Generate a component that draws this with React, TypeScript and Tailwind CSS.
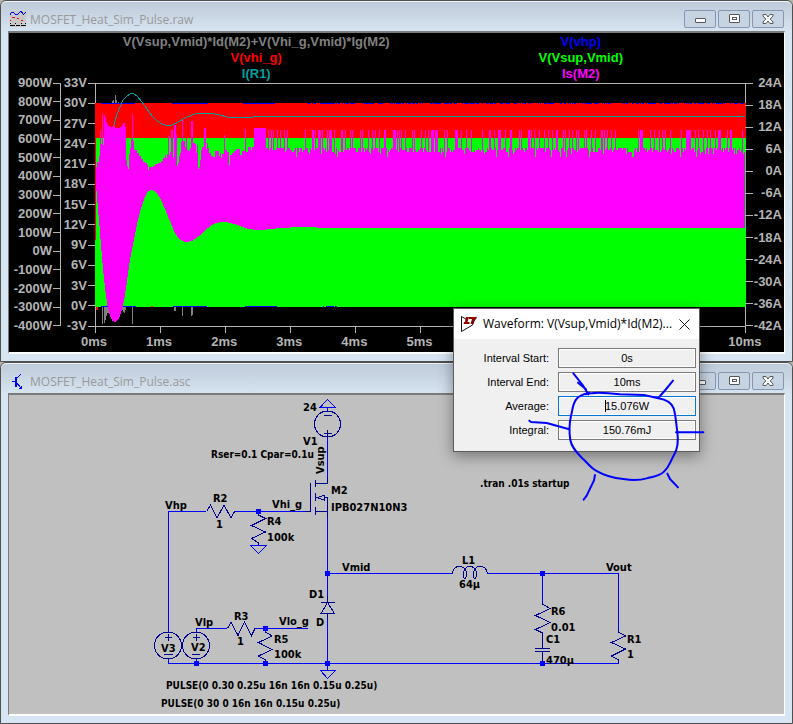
import React from 'react';

const WATTS = ['900W', '800W', '700W', '600W', '500W', '400W', '300W', '200W', '100W', '0W', '-100W', '-200W', '-300W', '-400W'];
const VOLTS = ['33V', '30V', '27V', '24V', '21V', '18V', '15V', '12V', '9V', '6V', '3V', '0V', '-3V'];
const AMPS = ['24A', '18A', '12A', '6A', '0A', '-6A', '-12A', '-18A', '-24A', '-30A', '-36A', '-42A'];
const TIMES = ['0ms', '1ms', '2ms', '3ms', '4ms', '5ms', '6ms', '7ms', '8ms', '9ms', '10ms'];

// Upper envelope of Is(M2) during start-up, as [x, y] steps.
const STARTUP: number[][] = [
  [96, 167], [97, 162], [99, 156], [100, 130], [101, 144], [102, 114], [103, 145], [104, 115], [105, 118], [106, 122],
  [107, 124], [108, 126], [110, 127], [113, 126], [115, 128], [120, 127], [122, 125], [123, 123], [125, 127],
  [126, 160], [127, 166], [128, 169], [129, 154], [130, 148], [131, 139], [132, 114], [133, 141], [134, 150],
  [136, 150], [137, 153], [139, 156], [141, 159], [143, 162], [145, 163], [147, 165], [148, 170], [149, 167],
  [153, 166], [155, 164], [158, 163], [161, 161], [163, 158], [165, 155], [166, 158], [167, 154], [168, 136], [169, 155],
  [170, 152], [171, 130], [173, 157], [174, 125], [176, 135], [177, 166], [178, 163], [179, 156], [180, 153],
  [181, 142], [182, 119], [183, 141], [185, 147], [186, 138], [187, 150], [189, 151], [190, 148], [191, 121],
  [193, 143], [195, 144], [196, 153], [197, 145], [198, 169], [199, 167], [200, 160], [201, 150], [202, 147],
  [204, 128], [206, 149], [207, 143], [208, 148], [209, 153], [211, 156], [213, 157], [215, 151], [218, 151],
  [219, 156], [220, 153], [221, 158], [222, 154], [224, 135], [225, 150], [227, 152], [229, 165], [230, 155],
  [232, 153], [234, 151], [236, 149], [240, 155], [242, 151], [245, 129], [246, 152], [248, 147], [251, 150],
  [252, 147], [254, 128], [266, 147],
];

const SPIKES_A = [10, 20, 26, 38, 46, 57, 68, 120, 143, 145, 150, 160, 163, 166, 172, 187, 193, 196, 199, 207, 229, 232, 240, 256, 262, 287, 293, 310, 322, 330, 343, 357, 362, 386, 389, 391, 398, 403, 410, 422, 443, 448, 468, 482, 490, 498, 501, 504, 512, 515, 518, 538, 547, 572, 575, 578, 590, 605, 620, 652, 673, 676, 687, 700, 703, 706, 722, 735, 740, 762, 770, 790];
const SPIKES_B = [5, 9, 20, 35, 50, 60, 72, 85, 88, 107, 112, 125, 133, 145, 152, 168, 175, 190, 203, 221, 224, 228, 238, 250, 262, 332, 338, 341, 344, 368, 380, 395, 402, 412, 427, 460, 474, 477, 480, 483, 486, 502, 512, 525, 537, 547, 562, 572, 575, 578, 597, 608, 611, 642];
const SPIKES = new Set([
  ...SPIKES_A.map((v) => 265 + Math.floor(v / 3)),
  ...SPIKES_B.map((v) => 528 + Math.floor(v / 3)),
]);

const noise = (n: number) => {
  const v = Math.sin(n * 12.9898) * 43758.5453;
  return v - Math.floor(v);
};

const magentaTop = (() => {
  let d = '';
  for (let i = 0; i < STARTUP.length - 1; i++) {
    const [x, y] = STARTUP[i];
    d += `L${x} ${y}H${STARTUP[i + 1][0]}`;
  }
  for (let x = 266; x < 745; x++) {
    const r = noise(x);
    let y = 148;
    if (r > 0.45) y = 150;
    if (r > 0.7) y = 152;
    if (r > 0.9) y = 154;
    if (r > 0.97) y = 157;
    if (SPIKES.has(x)) y = 130;
    d += `L${x} ${y}H${x + 1}`;
  }
  return d;
})();

const MAGENTA = `M96 185${magentaTop}V228H330C310 227 295 227 280 228C265 230 255 231 245 228C238 225 230 222 222 222C212 222 206 230 199 236C195 240 191 242 187 242C180 242 177 237 174 231C170 221 165 209 161 200C157 192 154 190 151 190C146 190 144 200 141 208C137 222 134 240 130 260C127 279 125 300 122 309C120 316 118 322 115 322C111 322 109 314 107 303C104 283 102 258 100 232C98 210 97 195 96 185Z`;

const vhpDashes = (() => {
  let d = 'M101 103.5H135M172 103.5H208M243 103.5H275';
  for (let x = 308; x < 744; x += 2) {
    if (noise(x + 7) > 0.35) d += `M${x} 103.5h${noise(x) > 0.5 ? 2 : 1}`;
  }
  return d;
})();

function Plot() {
  return (
    <svg viewBox="95 83 650 243" preserveAspectRatio="none" className="my-2 block h-[243px] min-w-0 flex-1 overflow-visible" shapeRendering="crispEdges" fill="none" aria-label="Waveform plot">
      <g fill="#808080">
        <path d="M112 101h1v2h-1zM113 100h1v3h-1zM115 95h1v8h-1zM116 100h1v3h-1zM118 102h1v1h-1z" />
        <path d="M102 307h1v17h-1zM104 307h1v16h-1zM105 307h1v13h-1zM106 307h1v9h-1zM107 307h2v6h-2zM121 307h2v3h-2zM123 307h1v5h-1zM124 307h1v6h-1zM125 307h1v3h-1zM132 307h1v17h-1zM174 307h2v4h-2zM182 307h1v9h-1zM191 307h1v9h-1zM192 307h1v8h-1z" />
      </g>
      <rect x="95" y="103" width="651" height="35" fill="#ff0000" />
      <rect x="95" y="138" width="651" height="169" fill="#00ff00" />
      <path d="M95 103h1v137h-1zM96 307h2v3h-2zM151 306h2v1h-2z" fill="#ff0000" />
      <path d={vhpDashes} stroke="#0000ff" />
      <path d="M101 306.5h35M173 306.5h34M245 306.5h32M323 306.5h1M326 306.5h8M335 306.5h2" stroke="#0000ff" />
      <path d={MAGENTA} fill="#ff00ff" />
      <path d="M113.5 126.5L117 114L120 107L123 100L127 96L130 94L133.5 93.5L137 96L142 102L147 109L152 116L157 121L162 124L167 125.5L172 125L178 122L185 118L192 115L197 113.5L202 113L213 113.5L220 115L227 117L240 118L253 117L265 116.5H745" stroke="#00a0a0" />
      <path d="M95.5 103V83.5M95 83.5H745.5V103M745.5 307V333M95 326.5H745M95.5 307V333" stroke="#b4b4b4" />
      <path d="M160.5 326v7M225.5 326v7M290.5 326v7M355.5 326v7M420.5 326v7M485.5 326v7M550.5 326v7M615.5 326v7M680.5 326v7" stroke="#b4b4b4" />
    </svg>
  );
}

function LeftAxis({ labels, className }: { labels: string[]; className: string }) {
  return (
    <div className={`my-2 h-[243px] shrink-0 ${className}`}>
      <div className="-my-2 flex h-[259px] flex-col justify-between">
        {labels.map((l) => (
          <div key={l} className="flex h-4 items-center justify-end">
            {l}
            <span className="ml-px h-px w-[7px] bg-[#b4b4b4]" />
          </div>
        ))}
      </div>
    </div>
  );
}

function WaveIcon() {
  return (
    <svg viewBox="0 0 16 16" className="size-4" shapeRendering="crispEdges" fill="none" aria-hidden="true">
      <rect width="16" height="16" fill="#c8c8c8" />
      <path d="M0 4L1 2L3 1L5 3L7 4L9 2L11 0L13 3L14 3L16 1" stroke="#0000ff" />
      <path d="M2 6h3v1H2zM7 7h2v1H7zM11 9h2v1h-2zM0 9h1v1H0z" fill="#ff0000" />
      <path d="M0 12h1v1H0zM5 12h1v1H5zM11 12h1v1h-1zM15 12h1v1h-1zM0 14h5v1H0zM6 14h4v1H6zM11 14h5v1h-5z" fill="#000" />
    </svg>
  );
}

function TransistorIcon() {
  return (
    <svg viewBox="0 0 16 16" className="size-4" shapeRendering="crispEdges" fill="none" aria-hidden="true">
      <path d="M2 8.500H6M6 9L11 15M5 7L11 1" stroke="#0000ff" />
      <path d="M5 4h2v10H5zM12 16V12L8 16Z" fill="#0000ff" />
    </svg>
  );
}

const captionButton = 'flex h-[18px] w-8 items-center justify-center rounded-xs border border-[#8697b3] bg-[#c6d3e1]';

function MdiWindow({ title, icon, children, clientClass }: { title: string; icon: React.ReactNode; children: React.ReactNode; clientClass: string }) {
  return (
    <section className="rounded-t-md border border-[#50504f] bg-[#d7e4f2] px-[7px] pb-[7px]">
      <header className="-mx-[7px] flex h-[30px] items-center rounded-t-md border-t border-[#eef3f8] bg-linear-to-b from-[#bfcbda] to-[#d6e3f0] pt-1 pr-2 pl-[9px]">
        {icon}
        <h1 className="ml-1 flex-1 pt-0.5 font-['Open_Sans','Noto_Sans',sans-serif] text-[12px] leading-4 text-[#999]">{title}</h1>
        <div className="flex gap-0.5">
          <button type="button" aria-label="Minimize" className={captionButton}>
            <span className="mt-1 h-[5px] w-[11px] rounded-[1px] border border-[#55565e] bg-white" />
          </button>
          <button type="button" aria-label="Restore" className={captionButton}>
            <span className="flex h-[9px] w-[11px] items-center justify-center rounded-[1px] border border-[#55565e] bg-white">
              <span className="h-[3px] w-[5px] border border-[#55565e]" />
            </span>
          </button>
          <button type="button" aria-label="Close" className={captionButton}>
            <svg viewBox="0 0 12 10" className="h-2.5 w-3" aria-hidden="true">
              <path d="M1 .5H4L6 3L8 .5H11V2L8.200 5L11 8V9.500H8L6 7L4 9.500H1V8L3.800 5L1 2Z" fill="#fff" stroke="#55565e" />
            </svg>
          </button>
        </div>
      </header>
      <div className={`min-h-[323px] border-x border-y-2 border-t-[#7b7b7b] border-r-white border-b-white border-l-[#7b7b7b] ${clientClass}`}>{children}</div>
    </section>
  );
}

function WaveformPane() {
  return (
    <div className="font-['Liberation_Sans',Arial,sans-serif] text-[13px] leading-4 font-bold">
      <div className="grid grid-cols-2 pt-px pr-[41px] pl-[85px] text-center">
        <span className="text-[#808080]">V(Vsup,Vmid)*Id(M2)+V(Vhi_g,Vmid)*Ig(M2)</span>
        <span className="text-[#0000ff]">V(vhp)</span>
        <span className="text-[#ff0000]">V(vhi_g)</span>
        <span className="text-[#00ff00]">V(Vsup,Vmid)</span>
        <span className="text-[#00a0a0]">I(R1)</span>
        <span className="text-[#ff00ff]">Is(M2)</span>
      </div>
      <div className="-mt-[7px] flex text-[#b4b4b4]">
        <LeftAxis labels={WATTS} className="w-[52px] border-r border-[#b4b4b4]" />
        <LeftAxis labels={VOLTS} className="w-[34px]" />
        <Plot />
        <div className="flex h-[259px] w-[39px] shrink-0 flex-col justify-between">
          {AMPS.map((l) => (
            <div key={l} className="flex h-4 items-center justify-between pr-0.5">
              <span className="h-px w-2 shrink-0 bg-[#b4b4b4]" />
              {l}
            </div>
          ))}
        </div>
      </div>
      <div className="flex justify-between pr-[15px] pl-[61px] text-center text-[#b4b4b4]">
        {TIMES.map((t) => (
          <span key={t} className="w-12">{t}</span>
        ))}
      </div>
    </div>
  );
}

type Label = [number, number, string];

const LABELS: Label[] = [
  [303, 411, '24'], [303, 445, 'V1'], [331, 494, 'M2'], [331, 511, 'IPB027N10N3'],
  [213, 502, 'R2'], [165, 509, 'Vhp'], [216, 528, '1'], [272, 508, 'Vhi_g'], [267, 525, 'R4'], [267, 541, '100k'],
  [342, 571, 'Vmid'], [309, 598, 'D1'], [316, 626, 'D'], [234, 620, 'R3'], [195, 626, 'Vlp'], [279, 625, 'Vlo_g'],
  [237, 645, '1'], [274, 643, 'R5'], [274, 658, '100k'], [161, 652, 'V3'], [191, 651, 'V2'],
  [462, 564, 'L1'], [459, 588, '64µ'], [606, 571, 'Vout'], [551, 615, 'R6'], [551, 631, '0.01'], [546, 643, 'C1'],
  [546, 664, '470µ'], [627, 643, 'R1'], [627, 658, '1'],
];

const DIRECTIVES: Label[] = [
  [211, 458, 'Rser=0.1 Cpar=0.1u'],
  [166, 689, 'PULSE(0 0.30 0.25u 16n 16n 0.15u 0.25u)'],
  [161, 707, 'PULSE(0 30 0 16n 16n 0.15u 0.25u)'],
  [480, 487, '.tran .01s startup'],
];

const NODES = [[258, 511], [327, 573], [542, 573], [265, 628], [196, 663], [265, 663], [327, 663], [542, 663]];

function Schematic() {
  return (
    <svg viewBox="9 395 775 319" preserveAspectRatio="xMinYMin meet" className="block h-[319px] w-full" fill="none" aria-label="Circuit schematic">
      <g stroke="#0000ff" shapeRendering="crispEdges">
        <path d="M327.500 437V478M168.500 632V511.500H206M234 511.500H305M327.500 518V602M327.500 614V670M327.500 573.500H453M487 573.500H618.500V631M542.500 573V604M196.500 632V628.500H227M255 628.500H308M168.500 659V663.500H618.500V660M196.500 659V663" />
        <path d="M327.500 399.500L320 407.500H335.500ZM327.500 408V411M250.500 545.500H266.500L258.500 553.500ZM320.500 670.500H335.500L327.500 678.500Z" />
      </g>
      <g stroke="#000090" shapeRendering="crispEdges">
        <circle cx="327.5" cy="424" r="13" />
        <circle cx="168" cy="645.5" r="13.5" />
        <circle cx="196" cy="645.5" r="13.5" />
        <path d="M324 415.500H332M324 433.500H332M327.500 430V437M165 637.500H172M168.500 634V641M164 654.500H173M193 637.500H200M196.500 634V641M192 654.500H200" />
        <path d="M327.500 477V483.500H315M315.500 480V487M310.500 483V511.500H305M315.500 493V501M315 497.500H317M324 495.500L317 497.500L324 500ZM324 497.500H327.500V518M315 511.500H328M315.500 507V515" />
        <path d="M206.500 511.500L210.500 505L217 518L224 505L231 518L234.500 511.500" />
        <path d="M258.500 513V515L265.500 518.500L251.500 525.500L265.500 532L251.500 538.500L258.500 543V545" />
        <path d="M227.500 628.500L231 622L238 635.500L244.500 622L251.500 635.500L255 628.500" />
        <path d="M265.500 630V632L272 636L258.500 642.500L272 649.500L258.500 656L265.500 660V663" />
        <path d="M327.500 596V602M321 602.500H334.500M327.500 602.500L321 613.500H334.500ZM327.500 614V619" />
        <path d="M542.500 603V604L550 608.500L535.500 615.500L550 622.500L535.500 629.500L542.500 633V648M535 648.500H550M535 651.500H550M542.500 652V663" />
        <path d="M618.500 630V632L625.500 636L611.500 642.500L625.500 649L611.500 656L618.500 660V663" />
        <path d="M452.500 573.500C453 569 456 566.500 459.500 566.500C465 566.500 467 571 466.500 575C466 579 463.500 580 463.500 575C463.500 569 466 566.500 470 566.500C475 566.500 477 571 476.500 575C476 579 473.500 580 473.500 575C473.500 569 476 566.500 480 566.500C484 566.500 487 569 487.500 573.500" />
      </g>
      {NODES.map(([x, y]) => (
        <rect key={`${x}-${y}`} x={x - 2} y={y - 2} width="5" height="5" fill="#0000ff" />
      ))}
      <g fill="#000" className="font-['DejaVu_Sans_Condensed','DejaVu_Sans',sans-serif] text-[11px] font-bold">
        {LABELS.map(([x, y, t]) => (
          <text key={`${x}-${y}`} x={x} y={y}>{t}</text>
        ))}
        <text transform="translate(324 474) rotate(-90)">Vsup</text>
      </g>
      <g fill="#000" className="font-['DejaVu_Sans_Condensed','DejaVu_Sans',sans-serif] text-[10px] font-bold">
        {DIRECTIVES.map(([x, y, t]) => (
          <text key={t} x={x} y={y}>{t}</text>
        ))}
      </g>
    </svg>
  );
}

const FIELDS = [
  { id: 'start', label: 'Interval Start:', value: '0s' },
  { id: 'end', label: 'Interval End:', value: '10ms' },
  { id: 'average', label: 'Average:', value: '15.076W', focused: true },
  { id: 'integral', label: 'Integral:', value: '150.76mJ' },
];

function WaveformDialog() {
  return (
    <div role="dialog" aria-label="Waveform" className="absolute top-[308px] left-[453px] w-[247px] border border-[#5c5c5c] bg-[#f0f0f0] shadow-[0_4px_14px_rgba(0,0,0,0.4)]">
      <div className="flex h-[30px] items-center bg-white pr-[9px] pl-[7px]">
        <svg viewBox="0 0 16 16" className="size-4" fill="none" aria-hidden="true">
          <path d="M.5 .5V15.500L11.500 9L14.500 1.500M.5 .5L5 3" stroke="#111" />
          <path d="M5 1H8L6.500 6H8.500V8H2.500L3 6H4ZM8 1H16L15 3.500H13.500L12 8H9.500L11 3H8Z" fill="#8b0000" />
        </svg>
        <h2 className="ml-1.5 flex-1 font-['Open_Sans','Noto_Sans',sans-serif] text-[12px] leading-4 whitespace-nowrap text-black">Waveform: V(Vsup,Vmid)*Id(M2)...</h2>
        <button type="button" aria-label="Close dialog" className="shrink-0">
          <svg viewBox="0 0 11 11" className="size-[11px]" aria-hidden="true">
            <path d="M.5 .5L10.500 10.500M10.500 .5L.5 10.500" stroke="#111" />
          </svg>
        </button>
      </div>
      <div className="flex flex-col gap-1 pt-[9px] pr-[3px] pb-[11px] font-['Liberation_Sans',Arial,sans-serif] text-[11px] leading-4 text-black">
        {FIELDS.map((f) => (
          <div key={f.id} className="flex h-5 items-center gap-[9px]">
            <label htmlFor={f.id} className="flex-1 text-right">{f.label}</label>
            <div className="relative h-5 w-[138px]">
              <input
                id={f.id}
                readOnly
                defaultValue={f.value}
                className={`h-5 w-full border bg-[#f0f0f0] text-center outline-1 -outline-offset-2 outline-white ${f.focused ? 'border-[#0078d7]' : 'border-[#7a7a7a]'}`}
              />
              {f.focused && <span className="absolute top-1 left-[47px] h-3 w-px bg-black" />}
            </div>
          </div>
        ))}
      </div>
    </div>
  );
}

function InkNotes() {
  return (
    <svg viewBox="0 0 1059 630" className="pointer-events-none absolute top-[295px] left-[440px] h-[210px] w-[353px]" fill="none" stroke="#0000ff" strokeWidth="6" strokeLinecap="round" strokeLinejoin="round" aria-hidden="true">
      <path d="M437 298C460 290 500 293 540 298L612 300L655 310C680 314 694 322 701 340C708 365 708 385 712 410C716 440 714 460 702 480C690 500 690 512 672 530C656 546 635 545 620 550C600 556 580 557 550 552C515 549 490 540 468 527C450 517 440 500 425 488C410 472 395 458 391 435C387 410 388 385 393 362C398 345 397 330 408 314C415 302 430 297 447 293" />
      <path d="M400 235L428 270L445 298M414 263L438 283" />
      <path d="M699 257L676 285L655 309M268 377L273 381L320 384L385 402M708 412H790M465 540L462 556L440 602L431 614M682 536L690 552L714 577" />
    </svg>
  );
}

export default function App() {
  return (
    <main className="relative min-h-screen bg-[#b5b3a5]">
      <MdiWindow title="MOSFET_Heat_Sim_Pulse.raw" icon={<WaveIcon />} clientClass="bg-black">
        <WaveformPane />
      </MdiWindow>
      <MdiWindow title="MOSFET_Heat_Sim_Pulse.asc" icon={<TransistorIcon />} clientClass="bg-[#c0c0c0]">
        <Schematic />
      </MdiWindow>
      <WaveformDialog />
      <InkNotes />
    </main>
  );
}
